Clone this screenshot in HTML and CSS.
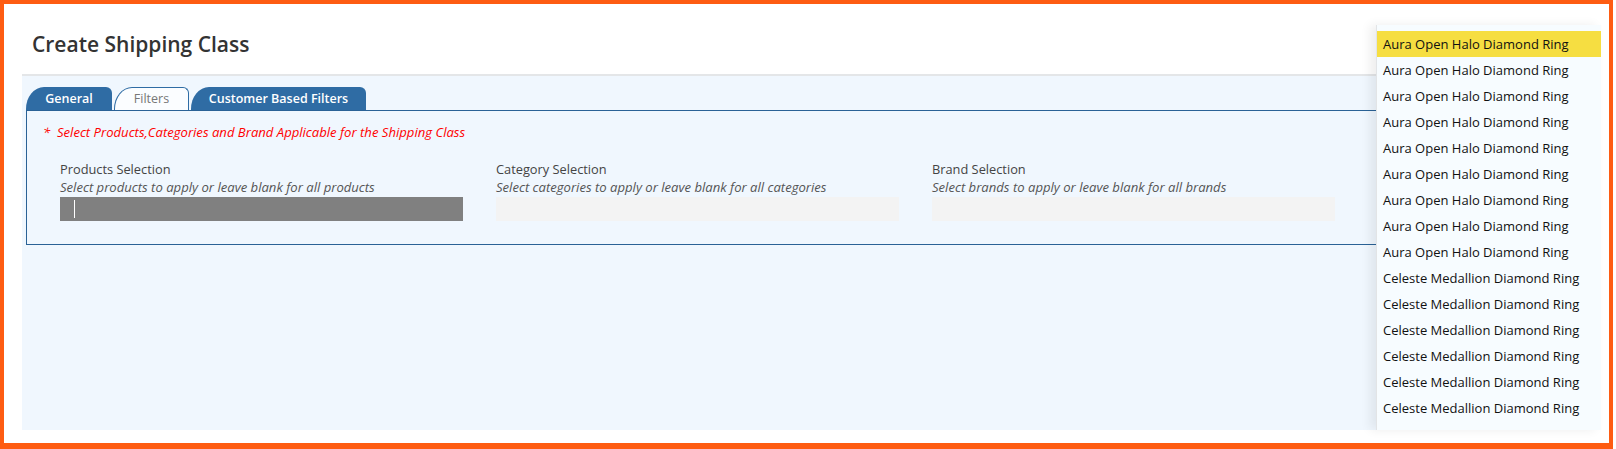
FILE: index.html
```html
<!DOCTYPE html>
<html lang="en">
<head>
<meta charset="utf-8">
<title>Create Shipping Class</title>
<link rel="stylesheet" href="styles.css">
</head>
<body>
<div class="frame">
  <header class="page-header">
    <h1 class="page-title">Create Shipping Class</h1>
  </header>
  <section class="panel">
    <nav class="tabs">
      <span class="tab">General</span>
      <span class="tab tab-active">Filters</span>
      <span class="tab">Customer Based Filters</span>
    </nav>
    <div class="tab-body">
      <p class="notice">*&nbsp; Select Products,Categories and Brand Applicable for the Shipping Class</p>
      <div class="fields">
        <div class="field">
          <div class="field-label">Products Selection</div>
          <div class="field-hint">Select products to apply or leave blank for all products</div>
          <div class="field-input field-input-focus"><span class="caret"></span></div>
        </div>
        <div class="field">
          <div class="field-label">Category Selection</div>
          <div class="field-hint">Select categories to apply or leave blank for all categories</div>
          <div class="field-input"></div>
        </div>
        <div class="field">
          <div class="field-label">Brand Selection</div>
          <div class="field-hint">Select brands to apply or leave blank for all brands</div>
          <div class="field-input"></div>
        </div>
      </div>
    </div>
  </section>
  <ul class="dropdown">
    <li class="option option-hover">Aura Open Halo Diamond Ring</li>
    <li class="option">Aura Open Halo Diamond Ring</li>
    <li class="option">Aura Open Halo Diamond Ring</li>
    <li class="option">Aura Open Halo Diamond Ring</li>
    <li class="option">Aura Open Halo Diamond Ring</li>
    <li class="option">Aura Open Halo Diamond Ring</li>
    <li class="option">Aura Open Halo Diamond Ring</li>
    <li class="option">Aura Open Halo Diamond Ring</li>
    <li class="option">Aura Open Halo Diamond Ring</li>
    <li class="option">Celeste Medallion Diamond Ring</li>
    <li class="option">Celeste Medallion Diamond Ring</li>
    <li class="option">Celeste Medallion Diamond Ring</li>
    <li class="option">Celeste Medallion Diamond Ring</li>
    <li class="option">Celeste Medallion Diamond Ring</li>
    <li class="option">Celeste Medallion Diamond Ring</li>
  </ul>
</div>
</body>
</html>
```
FILE: styles.css
```css
* { box-sizing: border-box; }
html, body { margin: 0; padding: 0; background: #fff; }
body {
  font-family: "Open Sans", "Noto Sans", sans-serif;
  color: #333;
}
.frame {
  position: relative;
  width: 1613px;
  height: 449px;
  border: 4px solid #fe5c12;
  border-bottom-width: 6px;
  background: #fff;
  overflow: hidden;
}
.page-header {
  height: 70px;
  padding: 25px 0 0 28px;
}
.page-title {
  margin: 0;
  font-size: 21px;
  line-height: 30px;
  font-weight: 600;
  color: #333;
}
.panel {
  margin-left: 18px;
  width: 1579px;
  height: 356px;
  background: #f0f7fe;
  border-top: 2px solid #e4e6e8;
  padding: 11px 0 0 4px;
}
.tabs {
  display: flex;
  gap: 2px;
  height: 23px;
  align-items: flex-end;
}
.tab {
  height: 23px;
  padding: 0 18px;
  background: #2f6ca4;
  color: #fff;
  font-size: 12.5px;
  font-weight: 600;
  line-height: 23px;
  border-top-left-radius: 18px 22px;
  border-top-right-radius: 6px;
}
.tab:first-child { width: 86px; text-align: center; padding: 0; }
.tab-active {
  width: 75px;
  padding: 0;
  text-align: center;
  background: #fbfdff;
  color: #777;
  font-weight: 400;
  border: 1px solid #2f6ca4;
  border-bottom: none;
  line-height: 22px;
}
.tab:last-child { width: 175px; text-align: center; padding: 0; }
.tab-body {
  width: 1560px;
  height: 135px;
  border: 1px solid #2a6296;
  padding: 12px 0 0 16px;
}
.notice {
  margin: 0;
  color: #f00;
  font-style: italic;
  font-size: 13.1px;
  line-height: 18px;
}
.fields {
  display: grid;
  grid-template-columns: repeat(3, 403px);
  column-gap: 33px;
  margin: 19px 0 0 17px;
}
.field-label {
  font-size: 12.8px;
  line-height: 18px;
  color: #444;
}
.field-hint {
  font-size: 13.1px;
  line-height: 19px;
  font-style: italic;
  color: #555;
}
.field-input {
  position: relative;
  height: 24px;
  background: #f3f3f3;
}
.field-input-focus { background: #808080; }
.caret {
  position: absolute;
  left: 14px;
  top: 3px;
  width: 1px;
  height: 18px;
  background: #fff;
}
.dropdown {
  position: absolute;
  left: 1372px;
  top: 21px;
  width: 225px;
  height: 405px;
  margin: 0;
  padding: 6px 0 0;
  list-style: none;
  background: #f7fcff;
  border-left: 1px solid #e2e4e6;
  box-shadow: -6px 0 10px rgba(0, 0, 0, 0.07);
  overflow: hidden;
}
.option {
  height: 26px;
  padding-left: 6px;
  font-size: 13px;
  line-height: 26px;
  color: #111;
  white-space: nowrap;
}
.option-hover { background: #f6de41; }
```
